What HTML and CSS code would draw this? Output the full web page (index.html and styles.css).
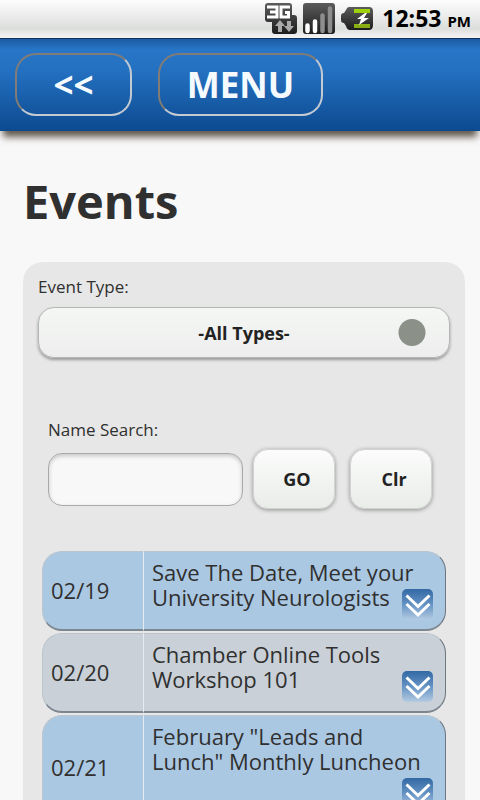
FILE: index.html
```html
<!DOCTYPE html>
<html lang="en">
  <head>
    <meta charset="utf-8">
    <meta name="viewport" content="width=device-width, initial-scale=1">
    <title>Events</title>
    <link rel="stylesheet" href="styles.css">
  </head>
  <body>
    <!-- shared artwork -->
    <svg class="defs" width="0" height="0" aria-hidden="true">
      <defs>
        <linearGradient id="dark" x1="0" y1="0" x2="0" y2="1">
          <stop offset="0" stop-color="#5c5c5c"/>
          <stop offset="1" stop-color="#1c1c1c"/>
        </linearGradient>
        <linearGradient id="green" x1="0" y1="0" x2="0" y2="1">
          <stop offset="0" stop-color="#a2d60a"/>
          <stop offset="1" stop-color="#86a814"/>
        </linearGradient>
        <linearGradient id="blue" x1="0" y1="0" x2="0" y2="1">
          <stop offset="0" stop-color="#3268a4"/>
          <stop offset="0.5" stop-color="#6593c4"/>
          <stop offset="1" stop-color="#b4cbe2"/>
        </linearGradient>
        <symbol id="chevrons" viewBox="0 0 32 32">
          <rect x="0" y="0" width="31" height="31" rx="5" fill="url(#blue)"/>
          <path d="M4.500 6.500L16 17.500L27.500 6.500M4.500 15L16 26L27.500 15" fill="none" stroke="#fff" stroke-width="3"/>
        </symbol>
      </defs>
    </svg>

    <div class="status-bar">
      <svg class="status-icon" width="32" height="32" viewBox="0 0 32 32" aria-hidden="true">
        <path d="M3 0H24Q27 0 27 3V12H29Q32 12 32 15V28Q32 31 29 31H10Q7 31 7 28V19H3Q0 19 0 16V3Q0 0 3 0Z" fill="url(#dark)"/>
        <path d="M2 4H12V14H2M5 9H12M25 4H16V14H23.500V9.500H20" fill="none" stroke="#fff" stroke-width="3"/>
        <path d="M15 17L20 23H17V29H13V23H10ZM24 29L29 23H26V18H22V23H19Z" fill="#aaa"/>
      </svg>
      <svg class="status-icon" width="32" height="32" viewBox="0 0 32 32" aria-hidden="true">
        <rect width="32" height="31" rx="3" fill="url(#dark)"/>
        <path d="M4.500 28V22.500M12 28V18.500" stroke="#fff" stroke-width="4.500" stroke-linecap="round"/>
        <path d="M19.500 28V12.500M27 28V5.500" stroke="#8d8d8d" stroke-width="4.500" stroke-linecap="round"/>
      </svg>
      <svg class="status-icon" width="32" height="32" viewBox="0 0 32 32" aria-hidden="true">
        <path d="M8 4H28Q32 4 32 8V22Q32 27 28 27H9Q6 27 5 23L3 20Q0 20 0 17V13Q0 10 3 10L5 7Q6 4 8 4Z" fill="url(#dark)"/>
        <path d="M13 6H29V10H13ZM13 21H29V25H13Z" fill="url(#green)"/>
        <path d="M24 10L16 16H20L18 22L28 15H23L26 10Z" fill="#fff"/>
      </svg>
      <span class="clock">12:53 <small>PM</small></span>
    </div>

    <header class="toolbar">
      <button class="nav-button" type="button">&lt;&lt;</button>
      <button class="nav-button menu" type="button">MENU</button>
    </header>

    <main>
      <h1>Events</h1>
      <form class="panel">
        <label for="eventType">Event Type:</label>
        <select id="eventType">
          <option>-All Types-</option>
        </select>

        <div class="search">
          <label for="nameSearch">Name Search:</label>
          <div class="search-row">
            <input type="text" id="nameSearch">
            <button class="small-button" type="button">GO</button>
            <button class="small-button clear" type="button">Clr</button>
          </div>
        </div>

        <table class="events">
          <tr>
            <td class="date">02/19</td>
            <td class="title">
              Save The Date, Meet your University Neurologists
              <button class="expand" type="button" aria-label="Show details"><svg width="32" height="32"><use href="#chevrons"/></svg></button>
            </td>
          </tr>
          <tr class="alt">
            <td class="date">02/20</td>
            <td class="title">
              Chamber Online Tools Workshop 101
              <button class="expand" type="button" aria-label="Show details"><svg width="32" height="32"><use href="#chevrons"/></svg></button>
            </td>
          </tr>
          <tr>
            <td class="date">02/21</td>
            <td class="title">
              February "Leads and Lunch" Monthly Luncheon
              <button class="expand" type="button" aria-label="Show details"><svg width="32" height="32"><use href="#chevrons"/></svg></button>
            </td>
          </tr>
        </table>
      </form>
    </main>
  </body>
</html>
```
FILE: styles.css
```css
* {
  box-sizing: border-box;
}

body {
  margin: 0;
  background-color: #f8f8f8;
  color: #303030;
  font-family: "Open Sans", "Noto Sans", sans-serif;
  font-size: 17px;
  line-height: 24px;
}

button,
input,
select {
  font-family: inherit;
}

.defs {
  position: absolute;
}

/* phone status bar */
.status-bar {
  display: flex;
  justify-content: flex-end;
  align-items: center;
  gap: 6px;
  height: 38px;
  padding: 0 9px;
  background: linear-gradient(#fdfdfd, #dcdedc 75%, #f4f4f4);
}

.clock {
  margin-left: 3px;
  color: #000;
  font-size: 23px;
  font-weight: bold;
}

.clock small {
  font-size: 15px;
}

/* blue toolbar */
.toolbar {
  display: flex;
  gap: 26px;
  padding: 14px 15px 15px;
  border-top: 1px solid #0d2f5c;
  background: linear-gradient(#1c5ca4, #2876c8 12%, #2470c0 35%, #0c4a90);
  box-shadow: 0 9px 7px -3px rgba(60, 50, 35, 0.8);
}

.nav-button {
  width: 117px;
  height: 63px;
  padding: 0;
  border: 2px solid;
  border-color: #827c76 #c3cad2 #c3cad2 #827c76;
  border-radius: 21px;
  background: none;
  color: #f5faff;
  font-size: 35px;
  font-weight: bold;
}

.nav-button.menu {
  width: 165px;
}

h1 {
  margin: 0;
  padding: 40px 23px 31px;
  font-size: 47px;
  line-height: 60px;
}

.panel {
  margin: 0 15px 0 23px;
  padding: 13px 15px 20px;
  border-radius: 20px;
  background-color: #e7e7e7;
}

.panel label {
  display: block;
}

select {
  display: block;
  width: 100%;
  height: 51px;
  margin-top: 8px;
  padding: 0;
  appearance: none;
  border: 1px solid #b4b8b4;
  border-radius: 16px;
  background:
    radial-gradient(circle 14px at calc(100% - 37px) 50%, #8b9088 13px, transparent 14px),
    linear-gradient(#f4f7f4, #ededed);
  box-shadow: 0 2px 3px rgba(0, 0, 0, 0.35);
  color: #222;
  font-size: 18px;
  font-weight: bold;
  text-align-last: center;
}

.search {
  padding: 60px 10px 0;
}

.search-row {
  display: flex;
  align-items: center;
  gap: 10px;
  margin-top: 7px;
}

.search-row input {
  flex: 1;
  min-width: 0;
  height: 53px;
  padding: 0 12px;
  border: 1px solid #a9a9a9;
  border-radius: 14px;
  background-color: #f8f8f8;
  box-shadow: inset 0 2px 4px rgba(0, 0, 0, 0.2);
  font-size: 18px;
}

.small-button {
  width: 82px;
  height: 60px;
  padding: 0 0 0 6px;
  border: 1px solid #d2d4d2;
  border-radius: 15px;
  background: linear-gradient(#fbfcfb, #e9ece9);
  box-shadow: 0 1px 4px rgba(0, 0, 0, 0.4);
  color: #222;
  font-size: 18px;
  font-weight: bold;
}

.small-button.clear {
  margin: 0 8px 0 5px;
}

/* event list */
.events {
  width: 404px;
  max-width: 100%;
  margin: 40px 0 0 4px;
  border-collapse: separate;
  border-spacing: 0 2px;
  font-size: 22px;
  line-height: 25px;
}

.events td {
  border: 1px solid #bcc5cd;
  border-bottom: 2px solid #7d8790;
  background-color: #abc8e3;
}

.events .alt td {
  background-color: #c9d0d7;
}

.events .date {
  width: 102px;
  padding: 0 8px;
  border-right-color: #e4ebf2;
  border-radius: 20px 0 0 20px;
}

.events .title {
  padding: 8px 11px 8px 8px;
  border-left: none;
  border-right: 1px solid #6e767e;
  border-radius: 0 20px 20px 0;
  vertical-align: top;
}

.expand {
  float: right;
  margin-top: 4px;
  padding: 0;
  border: none;
  background: none;
  line-height: 0;
}
```
